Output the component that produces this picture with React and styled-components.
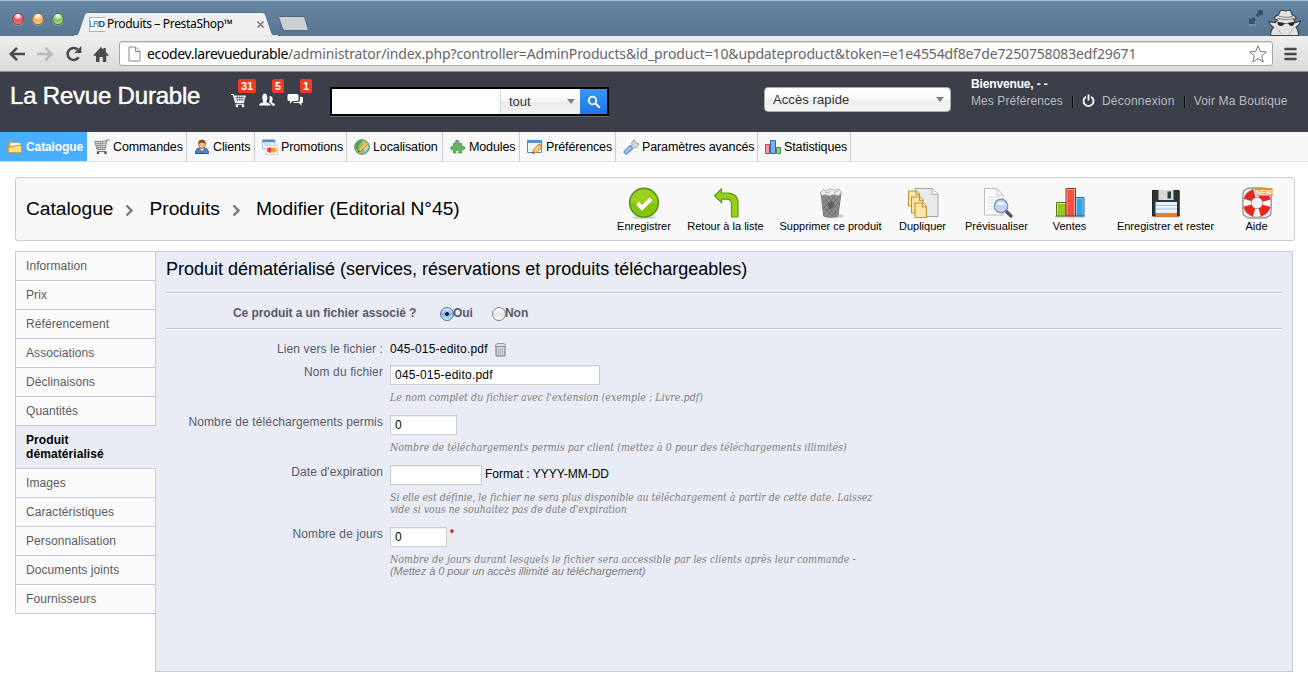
import React from "react";
import styled, { createGlobalStyle, css } from "styled-components";

const Global = createGlobalStyle`
  * { box-sizing: border-box; }
  body { margin: 0; background: #fff; color: #000; font: 12px/14px "Liberation Sans", Arial, sans-serif; }
  svg { display: block; flex: none; }
`;

const Page = styled.div`
  width: 1308px;
  height: 686px;
  overflow: hidden;
  background: #fff;
`;

/* ---------- browser chrome ---------- */
const TitleBar = styled.div`
  height: 36px;
  display: flex;
  align-items: flex-start;
  background: linear-gradient(#6686a3, #567692);
  border-top: 1px solid #a9bccb;
`;
const Lights = styled.div`
  display: flex;
  gap: 8px;
  padding: 12px 0 0 12px;
  width: 74px;
`;
const Light = styled.span`
  width: 12px;
  height: 12px;
  border-radius: 50%;
  border: 1px solid ${(p) => p.$edge};
  background: radial-gradient(circle at 50% 15%, #fff 0 8%, ${(p) => p.$tone} 50%, ${(p) => p.$glow} 100%);
  box-shadow: 0 1px 0 rgba(255, 255, 255, 0.25);
`;
const Tab = styled.div`
  position: relative;
  width: 204px;
  height: 24px;
  margin-top: 11px;
  display: flex;
  align-items: center;
  padding-left: 15px;
  & > svg:first-child { position: absolute; left: 0; top: 0; }
`;
const Favicon = styled.span`
  position: relative;
  width: 16px;
  height: 15px;
  overflow: hidden;
  background: #fff;
  border: 1px solid #9fb3c2;
  border-width: 1px 0 1px 1px;
  color: #2d6c9b;
  font: 9px/13px "Liberation Sans", sans-serif;
  letter-spacing: -1px;
  text-indent: -1px;
  white-space: nowrap;
  b { color: #164a74; }
`;
const TabTitle = styled.span`
  position: relative;
  margin-left: 2px;
  width: 149px;
  font: 12px/16px "Noto Sans", sans-serif;
  letter-spacing: -0.33px;
  white-space: nowrap;
`;
const TabClose = styled.svg`
  position: relative;
`;
const NewTab = styled.svg`
  margin-top: 15px;
`;
const TitleEnd = styled.div`
  margin: 0 5px 0 auto;
  display: flex;
  align-items: flex-start;
  svg:first-child { margin: 8px 4px 0 0; }
`;
const ToolBar = styled.div`
  height: 36px;
  display: flex;
  align-items: center;
  background: linear-gradient(#efefef, #d9dad8);
  border-bottom: 1px solid #8d9190;
  padding: 0 9px 0 8px;
`;
const NavIcons = styled.div`
  display: flex;
  align-items: center;
  gap: 9px;
  width: 111px;
`;
const Address = styled.div`
  width: 1154px;
  height: 25px;
  display: flex;
  align-items: center;
  padding: 0 5px 0 8px;
  background: #fff;
  border: 1px solid #a9a9a9;
  border-radius: 3px;
  box-shadow: inset 0 1px 1px #ddd;
`;
const Url = styled.span`
  flex: 1;
  margin-left: 6px;
  color: #666;
  font: 14px/18px "Noto Sans", sans-serif;
  letter-spacing: -0.14px;
  white-space: nowrap;
  b { color: #000; font-weight: 400; letter-spacing: -0.36px; }
`;

/* ---------- back-office header ---------- */
const Header = styled.header`
  height: 60px;
  display: flex;
  background: #3a3f49;
  color: #fff;
`;
const Brand = styled.h1`
  margin: 0;
  width: 231px;
  padding: 10px 0 0 10px;
  font: 24px/28px "Liberation Sans", sans-serif;
  letter-spacing: -0.2px;
  -webkit-text-stroke: 0.5px #fff;
  text-shadow: 0 1px 0 #111;
  white-space: nowrap;
`;
const Alerts = styled.div`
  display: flex;
  width: 99px;
  padding-top: 20px;
`;
const Alert = styled.div`
  position: relative;
  width: 28px;
`;
const Count = styled.span`
  position: absolute;
  left: ${(p) => p.$x}px;
  top: -13px;
  width: ${(p) => p.$w}px;
  height: 14px;
  border-radius: 2px;
  background: #ef3b24;
  font: bold 11px/14px "Liberation Sans", sans-serif;
  text-align: center;
`;
const Search = styled.div`
  width: 279px;
  height: 29px;
  margin-top: 15px;
  display: flex;
  border: 2px solid #000;
  background: #fff;
  box-shadow: 0 1px 0 #6b6e74;
`;
const SearchInput = styled.div`
  width: 168px;
  background: #fff;
`;
const SearchScope = styled.div`
  width: 80px;
  display: flex;
  align-items: center;
  justify-content: space-between;
  padding: 0 5px 0 8px;
  border-left: 1px dotted #bbb;
  background: linear-gradient(#fff 20%, #f4f4f4 50%, #ebebeb 52%, #f3f3f3);
  color: #333;
  font-size: 13px;
`;
const SearchGo = styled.div`
  flex: 1;
  display: flex;
  align-items: center;
  justify-content: center;
  background: linear-gradient(#3a96f0, #1a78e6);
`;
const QuickAccess = styled.div`
  width: 187px;
  height: 25px;
  margin: 15px 20px 0 155px;
  display: flex;
  align-items: center;
  justify-content: space-between;
  padding: 0 6px 0 8px;
  border: 1px solid #aaa;
  border-radius: 4px;
  background: linear-gradient(#fff 20%, #f6f6f6 50%, #eee 52%, #f4f4f4);
  color: #333;
  font-size: 13px;
  letter-spacing: 0.1px;
`;
const Caret = styled.span`
  border: solid transparent;
  border-width: 5px 4.5px 0;
  border-top-color: #808080;
`;
const Account = styled.div`
  flex: 1;
  padding-top: 5px;
  white-space: nowrap;
`;
const Welcome = styled.div`
  font-weight: bold;
  letter-spacing: -0.15px;
`;
const Links = styled.div`
  display: flex;
  align-items: center;
  margin-top: 3px;
  color: #b9bcc1;
`;
const LinkText = styled.span`
  margin-left: ${(p) => p.$gap || 0}px;
  letter-spacing: ${(p) => p.$track || 0}px;
`;
const Divider = styled.i`
  width: 2px;
  height: 12px;
  margin: 2px 8px 0 9px;
  border-left: 1px solid #0c0d10;
  border-right: 1px solid #4b505a;
`;

/* ---------- main menu ---------- */
const Menu = styled.nav`
  height: 30px;
  display: flex;
  background: #f8f8f8;
  border-bottom: 1px solid #dedede;
`;
const MenuItem = styled.a`
  width: ${(p) => p.$w}px;
  height: 29px;
  display: flex;
  align-items: center;
  gap: 3px;
  padding-left: 7px;
  border-right: 1px solid #ccc;
  font-size: 12.5px;
  letter-spacing: -0.12px;
  white-space: nowrap;
  ${(p) => p.$active && css`
    background: #49aeff;
    border-right-color: #49aeff;
    color: #fff;
    font-weight: bold;
    font-size: 12px;
    letter-spacing: -0.1px;
  `}
`;

/* ---------- breadcrumb and actions ---------- */
const PageHead = styled.section`
  width: 1280px;
  height: 64px;
  margin: 15px 0 10px 15px;
  display: flex;
  align-items: center;
  padding: 0 11px 0 10px;
  border: 1px solid #ccc;
  border-radius: 3px;
  background: #f8f8f8;
`;
const Crumbs = styled.div`
  flex: 1;
  display: flex;
  align-items: center;
  padding-bottom: 1px;
  font: 19.2px/24px "Liberation Sans", sans-serif;
  white-space: nowrap;
  svg { margin: 4px 15px 0 12px; }
`;
const Action = styled.button`
  width: ${(p) => p.$w}px;
  display: flex;
  flex-direction: column;
  align-items: center;
  padding: 2px 0 0;
  border: 0;
  background: none;
  font: 11px/14px "Liberation Sans", sans-serif;
  white-space: nowrap;
`;

/* ---------- product form ---------- */
const Body = styled.div`
  display: flex;
  padding-left: 15px;
`;
const Side = styled.ul`
  width: 141px;
  margin: 0 -1px 0 0;
  padding: 0;
  list-style: none;
  position: relative;
  align-self: flex-start;
  border: 1px solid #c8cbd9;
  border-width: 1px 0 0 1px;
  letter-spacing: 0.08px;
`;
const SideItem = styled.li`
  height: ${(p) => (p.$active ? 43 : 29)}px;
  padding: 7px 10px;
  border-bottom: 1px solid #c8cbd9;
  border-right: 1px solid ${(p) => (p.$active ? "#e9ecf4" : "#c8cbd9")};
  background: ${(p) => (p.$active ? "#e9ecf4" : "#fafafa")};
  color: ${(p) => (p.$active ? "#000" : "#5a5b62")};
  font-weight: ${(p) => (p.$active ? "bold" : "normal")};
`;
const Panel = styled.section`
  width: 1138px;
  height: 421px;
  padding: 0 10px;
  border: 1px solid #c8cbd9;
  background: #e9ecf4;
`;
const Title = styled.h2`
  height: 40px;
  margin: 0;
  padding-top: 5px;
  font: 18px/24px "Liberation Sans", sans-serif;
`;
const Rule = styled.div`
  height: 2px;
  background: #fff;
  border-top: 1px solid #c2c3c8;
`;
const Choice = styled.div`
  height: 34px;
  display: flex;
  align-items: center;
  padding: 4px 0 0 67px;
  font-weight: bold;
  color: #585a69;
  letter-spacing: -0.06px;
  white-space: nowrap;
`;
const Question = styled.span`
  width: 207px;
`;
const Radio = styled.span`
  width: 14px;
  height: 14px;
  margin: 2px -1px 0 0;
  border-radius: 50%;
  border: 1px solid ${(p) => (p.$on ? "#54749f" : "#858585")};
  background: ${(p) =>
    p.$on
      ? "radial-gradient(circle, #0a1a33 0 1.5px, transparent 2.3px), linear-gradient(#dcebfb, #7fb4ea 50%, #c5e8ff)"
      : "linear-gradient(#fff, #e6e6e6 50%, #fbfbfb)"};
`;
const RadioLabel = styled.span`
  width: 39px;
`;
const Field = styled.div`
  display: grid;
  grid-template-columns: 217px 1fr;
  column-gap: 7px;
  padding-bottom: 12px;
`;
const Label = styled.label`
  text-align: right;
  color: #585a69;
  letter-spacing: 0.12px;
`;
const LinkRow = styled(Field)`
  padding: 12px 0 9px;
`;
const FileLink = styled.div`
  display: flex;
  gap: 7px;
  height: 14px;
  letter-spacing: 0.22px;
  svg { margin-top: 1px; }
`;
const Line = styled.div`
  display: flex;
  gap: 3px;
`;
const Input = styled.div`
  width: ${(p) => p.$w}px;
  height: 20px;
  padding-left: 4px;
  line-height: 19px;
  letter-spacing: 0.22px;
  border: 1px solid #ccc;
  background: #fff;
  box-shadow: inset 0 1px 1px #eee;
`;
const Format = styled.span`
  padding-top: 2px;
`;
const Star = styled.sup`
  color: #c00;
  font: bold 10px/14px "Liberation Sans", sans-serif;
`;
const Help = styled.p`
  margin: 6px 0 0;
  color: #7f7f7f;
  font: italic 10.5px/12px "DejaVu Serif", Georgia, serif;
  font-stretch: condensed;
  letter-spacing: ${(p) => p.$track || 0}px;
  white-space: nowrap;
`;
const HelpSans = styled.span`
  font: italic 11px/12px "Liberation Sans", sans-serif;
  letter-spacing: -0.06px;
`;

/* ---------- icons ---------- */
const Svg = ({ s = 16, w = s, h = s, vb, children }) => (
  <svg width={w} height={h} viewBox={vb || `0 0 ${w} ${h}`} fill="none">{children}</svg>
);

const menuIcons = {
  folder: (
    <Svg>
      <path d="M1.500 13V4.500l1-1.500h4l1 1.500h6.500V13z" fill="#f0b544" stroke="#c8922d" />
      <path d="M3.500 4h9.500v3H3.500z" fill="#fff" stroke="#d9c58c" strokeWidth=".6" />
      <path d="M1.500 13.500V8l5-.2L8 6.500h6.500v7z" fill="#ffe08a" stroke="#d59f37" />
    </Svg>
  ),
  cart: (
    <Svg>
      <path d="M1 3.500l10.500-.5 1.800-2H16" stroke="#888" strokeWidth="1.2" />
      <path d="M.8 2.500L12.500 2l-1.500 8.500H3z" fill="#ddd" stroke="#888" />
      <path d="M1.500 4.500h10.500M2 6.500h9.800M2.500 8.500h9M4 2.500v7.500M6.300 2.500v7.500M8.500 2.500v7.500" stroke="#888" strokeWidth=".7" />
      <path d="M3 12.500h9.500" stroke="#777" strokeWidth="1.2" />
      <circle cx="4" cy="14" r="1.300" fill="#555" /><circle cx="11.500" cy="14" r="1.300" fill="#555" />
    </Svg>
  ),
  user: (
    <Svg>
      <path d="M1.500 14.500c0-3.500 1.500-5.500 4.500-5.500h4c3 0 4.500 2 4.500 5.500z" fill="#4d86c8" stroke="#2b5a99" />
      <path d="M6 9.500l2 3 2-3z" fill="#fff" /><path d="M8 10l-.8 4h1.600z" fill="#d03a30" />
      <ellipse cx="8" cy="5.500" rx="3.300" ry="4" fill="#f3bd87" stroke="#9a5a24" strokeWidth=".7" />
      <path d="M4.300 6C4 2 5.500.8 8 .8s4 1.400 3.700 5.200C11 4 9.500 3.800 8 3.800S5 4 4.300 6z" fill="#8a4a1c" />
    </Svg>
  ),
  promo: (
    <Svg>
      <path d="M.5.8h12.500v9H.5z" fill="#f3f6fb" stroke="#9db2cf" strokeWidth=".8" />
      <path d="M.5.8h12.500v2.400H.5z" fill="#4f86c9" /><path d="M2 5h7" stroke="#8ba5cc" strokeDasharray="1.500 1" />
      <path d="M4 6.500h11.500v9H4z" fill="#fff" stroke="#c6c6c6" strokeWidth=".8" />
      <circle cx="7.800" cy="11" r="2.800" fill="#e54335" /><circle cx="11.800" cy="11" r="2.800" fill="#f8a12a" />
    </Svg>
  ),
  globe: (
    <Svg>
      <circle cx="8" cy="8" r="7.300" fill="#8fc37c" stroke="#4c8b4a" />
      <path d="M1.500 6C3 3 6 1 9 1.500L5 6l-1 5c-2-1-3-3-2.500-5z" fill="#4f9e48" />
      <path d="M9 2c4 .5 6 4 5.300 7l-3 4-3-5z" fill="#a9d6ee" />
      <path d="M4 13l1-3.500 7-7 2.300 2.300-7 7z" fill="#f6c65b" stroke="#b67f25" strokeWidth=".8" />
      <path d="M4 13l.6-2 1.500 1.400z" fill="#444" />
    </Svg>
  ),
  puzzle: (
    <Svg>
      <path d="M3.500 4.500h2.200c.6-.6-.6-1-.4-2C5.600 1 8.800 1 9 2.500c.2 1-1 1.400-.4 2h2.900v3c.6.6 1-.5 2-.3 1.600.3 1.600 3.300 0 3.600-1 .2-1.400-.9-2-.3v3.500H8.800c-.6-.6.3-1 .1-1.800-.3-1.300-2.900-1.300-3.200 0-.2.8.7 1.200.1 1.800H3.500v-3.300c-.6-.6-1 .4-1.800.2-1.300-.3-1.300-3 0-3.300.8-.2 1.200.8 1.800.2z" fill="#68b660" stroke="#3e8c3a" strokeWidth=".8" />
    </Svg>
  ),
  prefs: (
    <Svg>
      <path d="M.5 1.500h14v12H.5z" fill="#f4f8fd" stroke="#4f86c9" /><path d="M.5 1.500h14v2.500H.5z" fill="#5b93d8" />
      <path d="M5.500 14.500l1-4 5.500-5.500 3 3-5.500 5.500z" fill="#f9cf66" stroke="#b57e22" strokeWidth=".9" />
      <path d="M5.500 14.500l.6-2 1.400 1.400z" fill="#444" /><path d="M12 5l3 3" stroke="#d78a62" strokeWidth="2" />
    </Svg>
  ),
  wrench: (
    <Svg>
      <path d="M9 6.500L8.800 3 11.500.600l.8 3.200 2.800.8.600-.6c.2 3-2 5-4.700 4.500L10 9.500 7 7z" fill="#d4d7db" stroke="#8b8f96" strokeWidth=".8" />
      <path d="M7 6.500l3 3-5.500 5.200c-2 1.300-4.500-1-3-3z" fill="#86b1ea" stroke="#4b7cc2" strokeWidth=".9" />
      <path d="M3 12.500l4.500-4.300" stroke="#cfe1f9" />
    </Svg>
  ),
  stats: (
    <Svg>
      <path d="M.5 5.500h4v9h-4z" fill="#f29a9a" stroke="#cf3f3f" /><path d="M5.500 1.500h5v13h-5z" fill="#7fb0f0" stroke="#2f64b5" />
      <path d="M11.500 8.500h4v6h-4z" fill="#8fcf8f" stroke="#3f8f3f" />
    </Svg>
  ),
};

const actionIcons = {
  save: (
    <Svg s={32}>
      <ellipse cx="16" cy="30.500" rx="12" ry="1.300" fill="#ccc" />
      <circle cx="16" cy="15.700" r="14.300" fill="#98d01a" stroke="#54961a" strokeWidth="1.600" />
      <path d="M3 16a13 13 0 0 0 26 0z" fill="#84c40c" />
      <path d="M9.500 16.300l4.600 4.500 8.800-9" stroke="#fff" strokeWidth="4" />
    </Svg>
  ),
  back: (
    <Svg s={32}>
      <path d="M4.500 9.200L11.500 2.500v4H18c6 0 10 4 10 10V30.500h-6.500V17.500c0-3-1.500-4.800-4.500-4.800h-5.500v3.300z" fill="#99cf16" stroke="#5e9c1b" strokeWidth="1.200" transform="translate(0 -.5)" />
    </Svg>
  ),
  trash: (
    <Svg s={32}>
      <ellipse cx="19" cy="29" rx="9.500" ry="2.300" fill="#d2d2d2" />
      <path d="M6 6l2.700 23c.5 1.500 13.600 1.500 14.200 0L26 6z" fill="#8f8f8f" stroke="#777" />
      <path d="M8 9l15 18M12 9l11 13M17 9l7 8M8 14l13 15M9 20l8 9M24 9L9 27M20 9L8 22M15 9l-7 8M24 15L12 29M23 22l-6 7" stroke="#666" strokeWidth=".7" />
      <path d="M13 17l4-3 2 5-4 3zM11 23l5-2" fill="#5e6264" stroke="#555" strokeWidth=".6" />
      <path d="M5.500 6L8 2.500l4 1.300L15 1.500l4 2 5-1.500 2.500 4-3 2.500-5-1-4 1.500-4-1.500-3 1z" fill="#ededed" stroke="#a5a5a5" strokeWidth=".8" />
      <path d="M10 5l3 1 3-2M19 6l4-2" stroke="#999" strokeWidth=".7" />
    </Svg>
  ),
  copy: (
    <Svg s={32}>
      <path d="M8 1.500h17.500l5.500 5.500v22.500H8z" fill="#e8eaeb" stroke="#a1a3a5" />
      <path d="M25 1.500V7.500h6" fill="#fff" stroke="#b0b0b0" />
      <g fill="#fbe6ab" stroke="#c19331" strokeWidth="1.100">
        <path d="M1.500 4h8l3 3v12h-11z" /><path d="M4.500 10h8.500l3 3v13H4.500z" /><path d="M8 16h8l3.500 3.500V30.500H8z" />
        <path d="M9 4v3.500h3.500M12.500 10v3.500H16M15.500 16v4h4" fill="#fff7db" />
      </g>
    </Svg>
  ),
  preview: (
    <Svg s={32}>
      <path d="M3.500 1.500H16l6 6.500v20H3.500z" fill="#fdfdfd" stroke="#bcbcbc" /><path d="M16 1.500V8h6" stroke="#c4c4c4" />
      <path d="M6 10h13M6 13h13M6 16h8M6 19h6M6 22h7" stroke="#d5dbe4" />
      <path d="M24.500 23.500l5.500 5.500" stroke="#555" strokeWidth="3.200" strokeLinecap="round" />
      <circle cx="20" cy="19" r="6.700" fill="#c3d5f6" stroke="#8398b7" strokeWidth="1.400" />
      <path d="M15.500 18a4.700 4.700 0 0 1 9 0z" fill="#e7effc" />
    </Svg>
  ),
  sales: (
    <Svg s={32}>
      <path d="M1 29.800h30" stroke="#b5b5b5" strokeWidth="1.300" />
      <path d="M2.500 15.500H12V29H2.500z" fill="#99c722" stroke="#527e14" />
      <path d="M21.500 10.500h8.500V29h-8.500z" fill="#32a1e4" stroke="#1c6da5" />
      <path d="M12 1.500h9.500V29H12z" fill="#f0523f" stroke="#9d2f25" />
      <path d="M13 28V2.500h7.500V28M3.500 28V16.500h8M22.500 28V11.500H29V28" stroke="#fff" strokeOpacity=".45" />
    </Svg>
  ),
  floppy: (
    <Svg s={32}>
      <path d="M1 30h30" stroke="#c8c8c8" />
      <path d="M2.500 3.500h26.700V29H2.500z" fill="#2e3336" stroke="#202426" />
      <path d="M8.500 3h15v10h-15z" fill="#d5dad9" /><path d="M17.500 4.500H21v7h-3.500z" fill="#26413f" />
      <path d="M5.500 15H27v11H5.500z" fill="#e8f2fa" /><path d="M5.500 18.500H27M5.500 22H27" stroke="#a9c6dc" />
      <path d="M5.500 26H27v3.700H5.500z" fill="#ee7d2b" />
    </Svg>
  ),
  help: (
    <Svg s={32}>
      <path d="M1.800 9L2.500 4l4-2.500 5-.5h9l5 .5 4 2.500.7 5v14l-.7 5-4 2.500-5 .5h-9l-5-.5-4-2.500-.7-5z" fill="#f1f1f1" stroke="#999" strokeWidth="1.300" />
      <circle cx="16" cy="16" r="9.800" stroke="#f7f7f7" strokeWidth="8.500" />
      <circle cx="16" cy="16" r="9.800" stroke="#e3281e" strokeWidth="8.500" strokeDasharray="9.700 5.694" strokeDashoffset="-2.850" />
      <circle cx="16" cy="16" r="14.200" stroke="#a66" strokeWidth=".6" />
      <circle cx="16" cy="16" r="5.600" fill="#f8f8f8" stroke="#a77" strokeWidth=".7" />
      <path d="M13.500 1H31.500v8H15.500z" fill="#f98f1d" />
      <text x="15" y="8" fontFamily="Liberation Sans" fontWeight="bold" fontSize="8" fill="#fff" textLength="16" lengthAdjust="spacingAndGlyphs">NEW</text>
    </Svg>
  ),
};

const Chevron = () => <Svg w={9} h={13}><path d="M1.500 1.500L6.500 6.500l-5 5" stroke="#777" strokeWidth="2.400" /></Svg>;

const menu = [
  ["folder", "Catalogue", 87], ["cart", "Commandes", 100], ["user", "Clients", 68], ["promo", "Promotions", 92],
  ["globe", "Localisation", 96], ["puzzle", "Modules", 77], ["prefs", "Préférences", 96],
  ["wrench", "Paramètres avancés", 142], ["stats", "Statistiques", 93],
];
const actions = [
  ["save", "Enregistrer", 72], ["back", "Retour à la liste", 91], ["trash", "Supprimer ce produit", 119],
  ["copy", "Dupliquer", 65], ["preview", "Prévisualiser", 83], ["sales", "Ventes", 63],
  ["floppy", "Enregistrer et rester", 129], ["help", "Aide", 53],
];
const sections = ["Information", "Prix", "Référencement", "Associations", "Déclinaisons", "Quantités",
  "Produit dématérialisé", "Images", "Caractéristiques", "Personnalisation", "Documents joints", "Fournisseurs"];

function BrowserChrome() {
  return (
    <>
      <TitleBar>
        <Lights>
          <Light $edge="#9c3d3e" $tone="#e2504f" $glow="#ff9d94" />
          <Light $edge="#a3713a" $tone="#efab4a" $glow="#ffe79a" />
          <Light $edge="#50793f" $tone="#7fbb5b" $glow="#cdf5a8" />
        </Lights>
        <Tab>
          <Svg w={204} h={24}>
            <path d="M0 24c3 0 4-2 5-5L10 4c1-3 2-3.500 5-3.500h172c3 0 4 .5 5 3.500l5 15c1 3 2 5 6 5z" fill="#efefef" stroke="#47637c" strokeWidth=".8" />
            <path d="M0 23.700h204" stroke="#efefef" />
          </Svg>
          <Favicon>LR<b>D</b></Favicon>
          <TabTitle>Produits – PrestaShop™</TabTitle>
          <TabClose width="9" height="9" viewBox="0 0 9 9"><path d="M1.500 1.500l6 6m0-6l-6 6" stroke="#777" strokeWidth="1.500" /></TabClose>
        </Tab>
        <NewTab width="31" height="16" viewBox="0 0 31 16">
          <path d="M2 .5h22c2 0 2.500.5 3 2l3 10c.5 1.500 0 2-1.500 2H8c-2 0-3-.5-3.500-2L.8 2C.5 1 1 .5 2 .5z" fill="#ccd0d3" stroke="#4c6780" />
        </NewTab>
        <TitleEnd>
          <Svg w={16} h={18}>
            <path d="M8.500 2H15v6.500l-2-2-3 3L7.500 7l3-3zM1 16V9.500l2 2L5.500 9 8 11.500 5.500 14l2 2z" fill="#3a5066" transform="translate(0 -1)" />
            <path d="M1 16h7" stroke="#8ba6be" />
          </Svg>
          <Svg w={35} h={35} vb="4 0 38 35">
            <path d="M7 36c-.5-4 1-7 3-9-3-1-4-3-5-6l7 1c1-1 2-2 2-3-2-.5-3-1-3-2 0-1.500 2-2.500 4-3l2-4c.5-2 2-2 4-1.200 1.500.6 3 .5 4.500 0 2-.8 3-.6 3.500 1.200l1.500 4c2.500.5 4 1.500 4 3 0 1-1 1.500-2.500 2l1.500 3 6-2c-1 4-2 5-5 7 2 2 3 5 2.500 9z" fill="#e2e2e2" stroke="#37434d" strokeWidth="1.300" />
            <path d="M14 17c4 2 15 2 19 0M16 15c4 1.500 11 1.500 15 0" stroke="#777" />
            <path d="M14 21l8 1.500h3l8-1.500-1 3.500c-2 2-5 1-6-1.500h-4c-1 3-5 3.500-7 1.500z" fill="#262626" />
            <path d="M13 27l6 8M32 27l-5 8" stroke="#aaa" />
          </Svg>
        </TitleEnd>
      </TitleBar>
      <ToolBar>
        <NavIcons>
          <Svg w={18} h={18}><path d="M17 9H3.500M9 2.800L2.800 9 9 15.200" stroke="#4a4a4a" strokeWidth="2.600" /></Svg>
          <Svg w={20} h={18}><path d="M2 9h14M10.500 2.800L16.700 9l-6.200 6.200" stroke="#b8b8b8" strokeWidth="2.600" /></Svg>
          <Svg w={20} h={18}>
            <path d="M14.600 12.300A6 6 0 1 1 13.800 4.700" stroke="#4a4a4a" strokeWidth="2.500" />
            <path d="M17.300 1v7h-7z" fill="#4a4a4a" />
          </Svg>
          <Svg w={16} h={18}><path d="M.5 10L8 2l2.500 2.500V3h2.300v4L15.500 10v.7H13.200V17H9.800v-5H6.500v5H3v-6.300H.5z" fill="#4a4a4a" /></Svg>
        </NavIcons>
        <Address>
          <Svg w={13} h={16}><path d="M1 1h6.500L12 5.500V15H1zM7.500 1v4.500H12" fill="#fdfdfd" stroke="#888" /></Svg>
          <Url><b>ecodev.larevuedurable</b>/administrator/index.php?controller=AdminProducts&amp;id_product=10&amp;updateproduct&amp;token=e1e4554df8e7de7250758083edf29671</Url>
          <Svg w={18} h={18}><path d="M9 .8l2.300 5.700 6.100.4-4.700 4 1.500 6L9 13.600l-5.200 3.300 1.500-6-4.700-4 6.100-.4z" fill="#fff" stroke="#777" /></Svg>
        </Address>
        <Svg w={24} h={18}><path d="M12.500 4h10M12.500 9h10M12.500 14h10" stroke="#4a4a4a" strokeWidth="2.600" strokeLinecap="round" /></Svg>
      </ToolBar>
    </>
  );
}

function AdminHeader() {
  return (
    <Header>
      <Brand>La Revue Durable</Brand>
      <Alerts>
        <Alert>
          <Svg w={16} h={16}>
            <path d="M0 2.500h2.200L4.500 10.500h8.500M4.500 12.300h8.500" stroke="#fff" strokeWidth="1.100" />
            <path d="M3 3.500H15l-2 6.500H4.800z" fill="#fff" />
            <path d="M4 5.500h10M4.500 7.700h9M6.500 3.500v6M8.800 3.500v6M11.100 3.500v6" stroke="#3a3f49" strokeWidth=".6" />
            <circle cx="6" cy="14" r="1.300" fill="#fff" /><circle cx="12" cy="14" r="1.300" fill="#fff" />
          </Svg>
          <Count $x={7} $w={18}>31</Count>
        </Alert>
        <Alert>
          <Svg w={17} h={16}>
            <path d="M0 13.500c0-2.200 3-2.200 4.300-3.700 0-.8-1-1.600-1-4C3.300 3.500 4.200 1.500 5.800 1.500s2.500 2 2.500 4.300c0 2.400-1 3.200-1 4 1.200 1.500 4.300 1.500 4.300 3.700z" fill="#fff" />
            <path d="M10.300 4.500c2.200-1 3.700.5 3.300 3-.2 1.400-.8 1.800-.6 2.700 1 1 3.200 1.200 3.200 3.300h-3.300c-.3-2-1.700-2.500-3-3.300 1-1.500 1.100-3.700.4-5.700z" fill="#fff" />
          </Svg>
          <Count $x={13} $w={12}>5</Count>
        </Alert>
        <Alert>
          <Svg w={17} h={16}>
            <path d="M2 2h8q1.500 0 1.500 1.500v4Q11.500 9 10 9H5.500L3 11.700V9H2Q.5 9 .5 7.500v-4Q.5 2 2 2z" fill="#fff" />
            <path d="M13 4.500q3 0 3 1.500v3.500q0 1.500-1.500 1.500v2.700L12 11H7.500q-1 0-1.300-1H11q1.800 0 2-2z" fill="#fff" />
          </Svg>
          <Count $x={13} $w={12}>1</Count>
        </Alert>
      </Alerts>
      <Search>
        <SearchInput />
        <SearchScope>tout<Caret /></SearchScope>
        <SearchGo>
          <Svg w={14} h={14}><circle cx="5.500" cy="5.500" r="3.800" stroke="#fff" strokeWidth="1.800" /><path d="M8.300 8.300l4.500 4.500" stroke="#fff" strokeWidth="2" /></Svg>
        </SearchGo>
      </Search>
      <QuickAccess>Accès rapide<Caret /></QuickAccess>
      <Account>
        <Welcome>Bienvenue, - -</Welcome>
        <Links>
          <LinkText $track={0.08}>Mes Préférences</LinkText>
          <Divider />
          <Svg w={13} h={14}><path d="M4 2.700a5 5 0 1 0 5 0M6.500 .5v6" stroke="#fff" strokeWidth="1.800" /></Svg>
          <LinkText $gap={7} $track={0.25}>Déconnexion</LinkText>
          <Divider />
          <LinkText $track={0.16}>Voir Ma Boutique</LinkText>
        </Links>
      </Account>
    </Header>
  );
}

function ProductForm() {
  return (
    <Panel>
      <Title>Produit dématérialisé (services, réservations et produits téléchargeables)</Title>
      <Rule />
      <Choice>
        <Question>Ce produit a un fichier associé ?</Question>
        <Radio $on /><RadioLabel>Oui</RadioLabel>
        <Radio /><RadioLabel>Non</RadioLabel>
      </Choice>
      <Rule />
      <LinkRow>
        <Label>Lien vers le fichier :</Label>
        <FileLink>
          045-015-edito.pdf
          <Svg w={11} h={14}>
            <path d="M1 2.500h9V13H1z" fill="#d2d2d2" stroke="#777" /><path d="M.5 3.500V2.500Q1 .6 3 .6h5q2 0 2.500 1.900v1z" fill="#e4e4e4" stroke="#888" strokeWidth=".9" />
            <path d="M3.500 5.500v6M5.500 5.500v6M7.500 5.500v6" stroke="#aaa" strokeWidth=".8" />
          </Svg>
        </FileLink>
      </LinkRow>
      <Field>
        <Label>Nom du fichier</Label>
        <div>
          <Input $w={210}>045-015-edito.pdf</Input>
          <Help $track={0.07}>Le nom complet du fichier avec l'extension (exemple : Livre.pdf)</Help>
        </div>
      </Field>
      <Field>
        <Label>Nombre de téléchargements permis</Label>
        <div>
          <Input $w={67}>0</Input>
          <Help $track={0.05}>Nombre de téléchargements permis par client (mettez à 0 pour des téléchargements illimités)</Help>
        </div>
      </Field>
      <Field>
        <Label>Date d'expiration</Label>
        <div>
          <Line><Input $w={92} /><Format>Format : YYYY-MM-DD</Format></Line>
          <Help $track={-0.02}>
            Si elle est définie, le fichier ne sera plus disponible au téléchargement à partir de cette date. Laissez<br />
            vide si vous ne souhaitez pas de date d'expiration
          </Help>
        </div>
      </Field>
      <Field>
        <Label>Nombre de jours</Label>
        <div>
          <Line><Input $w={57}>0</Input><Star>*</Star></Line>
          <Help $track={0.03}>
            Nombre de jours durant lesquels le fichier sera accessible par les clients après leur commande -<br />
            <HelpSans>(Mettez à 0 pour un accès illimité au téléchargement)</HelpSans>
          </Help>
        </div>
      </Field>
    </Panel>
  );
}

export default function App() {
  return (
    <Page>
      <Global />
      <BrowserChrome />
      <AdminHeader />
      <Menu>
        {menu.map(([icon, label, w], i) => (
          <MenuItem key={icon} $w={w} $active={i === 0}>{menuIcons[icon]}{label}</MenuItem>
        ))}
      </Menu>
      <PageHead>
        <Crumbs>Catalogue<Chevron />Produits<Chevron />Modifier (Editorial N°45)</Crumbs>
        {actions.map(([icon, label, w]) => (
          <Action key={icon} $w={w}>{actionIcons[icon]}{label}</Action>
        ))}
      </PageHead>
      <Body>
        <Side>
          {sections.map((s) => <SideItem key={s} $active={s === "Produit dématérialisé"}>{s}</SideItem>)}
        </Side>
        <ProductForm />
      </Body>
    </Page>
  );
}
